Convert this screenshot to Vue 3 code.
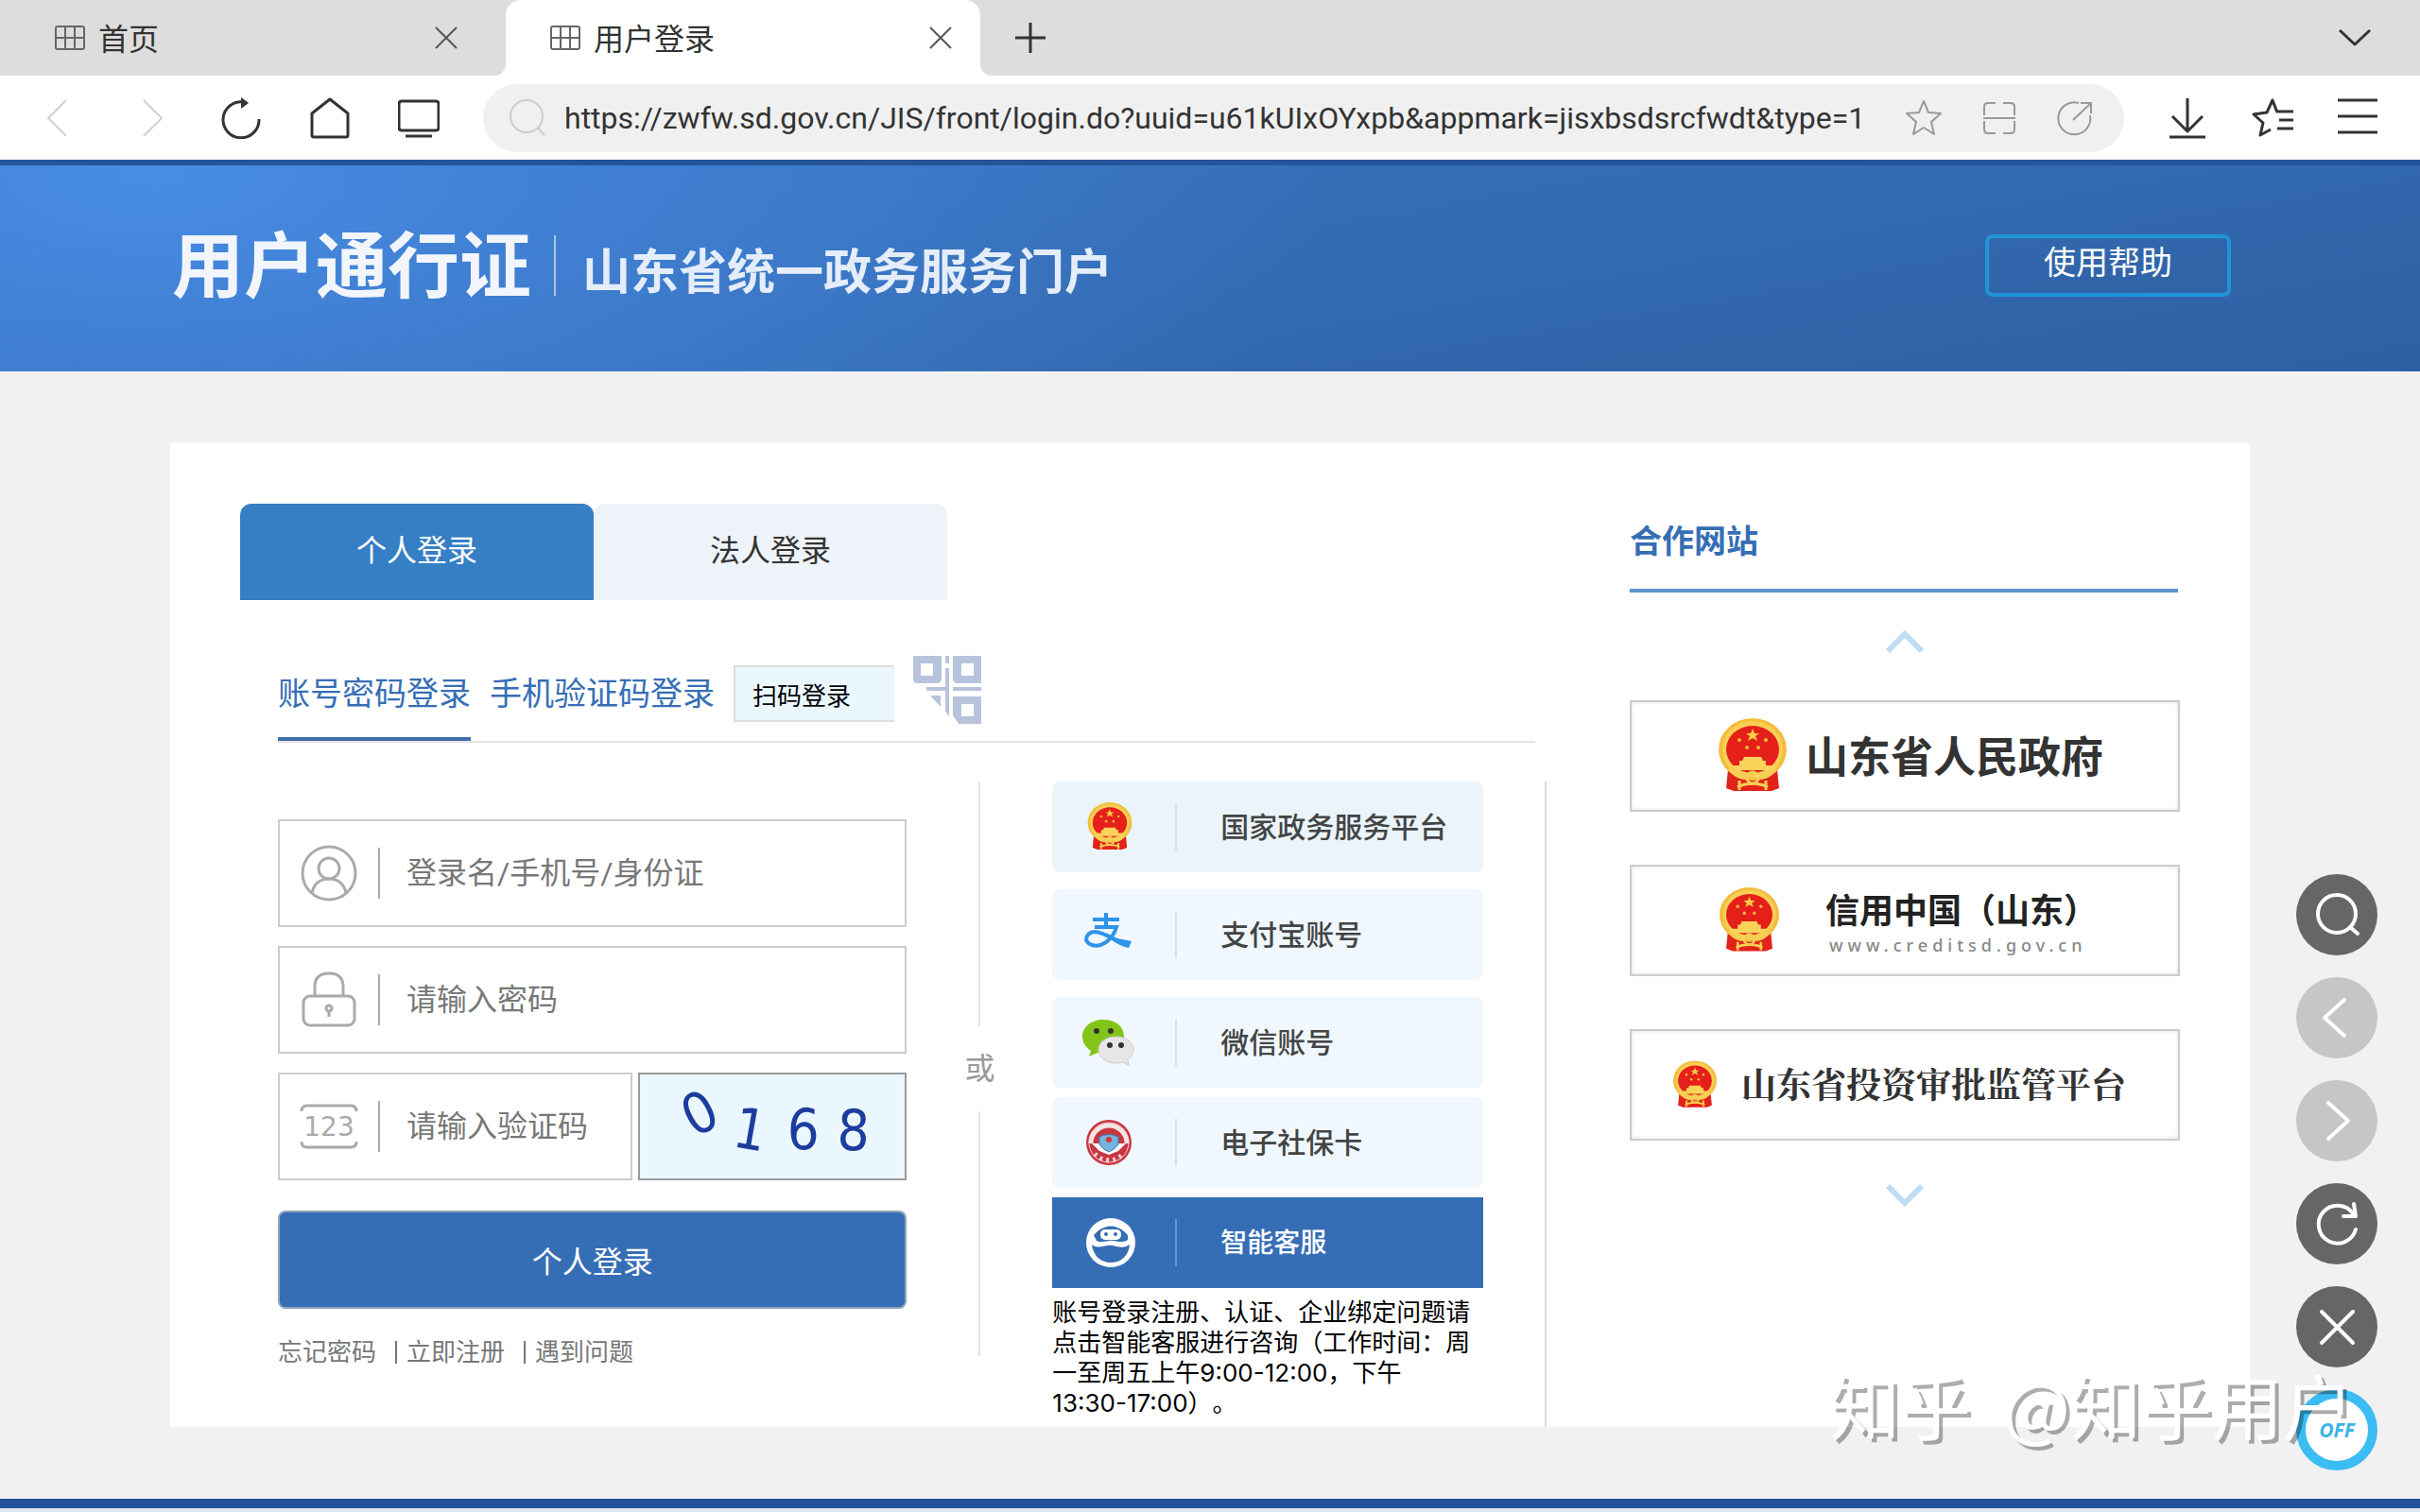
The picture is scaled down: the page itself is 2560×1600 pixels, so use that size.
<script setup>
import { ref } from 'vue'

const url = ref('https://zwfw.sd.gov.cn/JIS/front/login.do?uuid=u61kUIxOYxpb&appmark=jisxbsdsrcfwdt&type=1')
const account = ref('')
const password = ref('')
const code = ref('')

const captcha = [
  { d: '0', x: 62, y: 42, r: -27 },
  { d: '1', x: 118, y: 60, r: 10 },
  { d: '6', x: 176, y: 60, r: 2 },
  { d: '8', x: 231, y: 61, r: 2 }
]
</script>

<template>
  <div class="screen">
    <svg class="defs" aria-hidden="true">
      <symbol id="emblem" viewBox="0 0 72 80">
        <path d="M10 54h52l2 20-8 3H16l-8-3z" fill="#e2231a" />
        <ellipse cx="36" cy="33" rx="36" ry="33" fill="#f3bd3c" />
        <ellipse cx="36" cy="33" rx="32" ry="30" fill="#f8cf55" />
        <ellipse cx="36" cy="33" rx="28" ry="25" fill="#e5201a" />
        <path d="M36 11l2 5h5l-4 3 2 5-5-3-5 3 2-5-4-3h5z" fill="#f6cf45" />
        <g fill="#f3b93a">
          <circle cx="22" cy="23" r="2" /><circle cx="50" cy="23" r="2" />
          <circle cx="30" cy="31" r="2" /><circle cx="42" cy="31" r="2" />
        </g>
        <path d="M27 41h18l2 4h3v5h8l-4 5H18l-4-5h8v-5h3z" fill="#fbd25a" />
        <path d="M12 53c8 11 16 12 24 5 8 7 16 6 24-5" fill="none" stroke="#f8cf55" stroke-width="4" />
        <circle cx="36" cy="63" r="6" fill="none" stroke="#f8cf55" stroke-width="3" />
        <path d="M20 73c8-5 24-5 32 0M22 66v10M50 66v10" fill="none" stroke="#f8cf55" stroke-width="3" />
      </symbol>
      <symbol id="grid" viewBox="0 0 44 44">
        <path d="M9 10h26q2 0 2 2v20q0 2-2 2H9q-2 0-2-2V12q0-2 2-2zM7 22h30M17 10v24M27 10v24" fill="none" stroke="#666" stroke-width="2" />
      </symbol>
      <symbol id="cross" viewBox="0 0 44 44">
        <path d="M11 11l22 22M33 11L11 33" fill="none" stroke="#555" stroke-width="2" />
      </symbol>
    </svg>

    <div class="tabstrip">
      <div class="tab">
        <svg class="ic"><use href="#grid" /></svg>
        <span class="tab-title">首页</span>
        <button class="icon-btn" aria-label="关闭首页"><svg class="ic"><use href="#cross" /></svg></button>
      </div>
      <div class="tab active">
        <svg class="ic"><use href="#grid" /></svg>
        <span class="tab-title">用户登录</span>
        <button class="icon-btn" aria-label="关闭用户登录"><svg class="ic"><use href="#cross" /></svg></button>
      </div>
      <button class="icon-btn add" aria-label="新标签页">
        <svg class="ic" viewBox="0 0 44 44"><path d="M22 6v32M6 22h32" class="dark" /></svg>
      </button>
      <button class="icon-btn more" aria-label="全部标签页">
        <svg class="ic" viewBox="0 0 44 44"><path d="M6 14l16 15 16-15" class="dark" /></svg>
      </button>
    </div>

    <div class="toolbar">
      <div class="history">
        <button class="icon-btn" aria-label="后退"><svg class="ic" viewBox="0 0 44 44"><path d="M32 3L13 22l19 19" class="light" /></svg></button>
        <button class="icon-btn" aria-label="前进"><svg class="ic" viewBox="0 0 44 44"><path d="M12 3l19 19-19 19" class="light" /></svg></button>
      </div>
      <div class="actions">
        <button class="icon-btn" aria-label="刷新"><svg class="ic" viewBox="0 0 44 44"><path d="M41 23a19 19 0 1 1-16-18" class="dark" /><path d="M22 0l8 6-8 6z" fill="#333" /></svg></button>
        <button class="icon-btn" aria-label="主页"><svg class="ic" viewBox="0 0 44 44"><path d="M3 17L22 2l19 15v23q0 2-2 2H5q-2 0-2-2z" class="dark" /></svg></button>
        <button class="icon-btn" aria-label="桌面模式"><svg class="ic" viewBox="0 0 44 44"><path d="M4 4h36q3 0 3 3v25q0 3-3 3H4q-3 0-3-3V7q0-3 3-3zM8 41h28" class="dark" /></svg></button>
      </div>
      <div class="address">
        <svg class="ic" viewBox="0 0 44 44"><circle cx="22" cy="20" r="17" fill="none" stroke="#ccc" stroke-width="2" /><path d="M34 32l7 8" stroke="#ccc" stroke-width="2" /></svg>
        <input v-model="url" class="url" type="text" aria-label="网址" />
        <div class="address-tools">
          <button class="icon-btn" aria-label="收藏"><svg class="ic" viewBox="0 0 44 44"><path d="M22 4l5 12 13 1-10 9 3 13-11-7-11 7 3-13-10-9 13-1z" class="mid" /></svg></button>
          <button class="icon-btn" aria-label="扫描"><svg class="ic" viewBox="0 0 44 44"><path d="M18 6h-8q-4 0-4 4v9M26 6h8q4 0 4 4v9M18 38h-8q-4 0-4-4v-9M26 38h8q4 0 4-4v-9M5 22h34" class="mid" /></svg></button>
          <button class="icon-btn" aria-label="分享"><svg class="ic" viewBox="0 0 44 44"><path d="M26 6A17 17 0 1 0 38 19M28 6h11v11M39 6L20 24" class="mid" /></svg></button>
        </div>
      </div>
      <div class="menus">
        <button class="icon-btn" aria-label="下载"><svg class="ic" viewBox="0 0 44 44"><path d="M22 1v34M6 20l16 16 16-16M3 42h38" class="dark" /></svg></button>
        <button class="icon-btn" aria-label="书签"><svg class="ic" viewBox="0 0 44 44"><path d="M27 16l-5-13-6 13-14 2 10 9-3 13 11-6M26 15h18M29 24h15M27 33h17" class="dark" /></svg></button>
        <button class="icon-btn" aria-label="菜单"><svg class="ic" viewBox="0 0 44 44"><path d="M1 3h42M1 20h42M1 37h42" class="dark" /></svg></button>
      </div>
    </div>

    <header class="banner">
      <div class="brand">
        <h1>用户通行证</h1>
        <span class="brand-line"></span>
        <span class="brand-sub">山东省统一政务服务门户</span>
      </div>
      <button class="help">使用帮助</button>
    </header>

    <main class="page">
      <div class="card">
        <section class="login">
          <div class="roles">
            <button class="role on">个人登录</button>
            <button class="role">法人登录</button>
          </div>
          <div class="methods">
            <a href="#" class="method on">账号密码登录</a>
            <a href="#" class="method">手机验证码登录</a>
            <button class="scan">扫码登录</button>
            <svg class="qr" viewBox="0 0 72 72">
              <path d="M0 0h30v24q0 5-5 5H5q-5 0-5-5zM42 0h30v29H47q-5 0-5-5zM42 43h30v29H48l-6-9z" fill="#b7c3db" />
              <path d="M8 8h13v13H8zM51 8h13v13H51zM51 51h13v13H51z" fill="#fff" />
              <path d="M34 0h4v8h-4zM34 13h4v20h-4zM14 33h24v4H14zM42 33h30v4H42zM34 37h4v27l-4-5zM18 42h11v12z" fill="#b7c3db" />
            </svg>
          </div>
          <div class="body">
            <form class="form" @submit.prevent>
              <label class="field">
                <svg class="fi" viewBox="0 0 64 64"><g class="soft"><circle cx="32" cy="32" r="28" /><circle cx="32" cy="27" r="11" /><path d="M14 53c2-10 9-15 18-15s16 5 18 15" /></g></svg>
                <input v-model="account" type="text" placeholder="登录名/手机号/身份证" aria-label="登录名" />
              </label>
              <label class="field">
                <svg class="fi" viewBox="0 0 64 64"><g class="soft"><rect x="5" y="28" width="54" height="31" rx="7" /><path d="M17 28V18q0-14 15-14t15 14v10" /><circle cx="32" cy="41" r="3" /><path d="M32 44v6" /></g></svg>
                <input v-model="password" type="password" placeholder="请输入密码" aria-label="密码" />
              </label>
              <div class="code-row">
                <label class="field">
                  <svg class="fi" viewBox="0 0 64 64"><path d="M3 16q0-6 6-6h46q6 0 6 6M3 48q0 6 6 6h46q6 0 6-6" class="soft" /><text x="32" y="42" text-anchor="middle" class="num">123</text></svg>
                  <input v-model="code" type="text" placeholder="请输入验证码" aria-label="验证码" />
                </label>
                <button type="button" class="captcha" aria-label="换一张验证码">
                  <svg viewBox="0 0 284 114">
                    <text v-for="c in captcha" :key="c.d" :transform="`translate(${c.x} ${c.y}) rotate(${c.r})`" y="22" text-anchor="middle">{{ c.d }}</text>
                  </svg>
                </button>
              </div>
              <button class="submit">个人登录</button>
              <div class="links">
                <a href="#">忘记密码</a><a href="#">立即注册</a><a href="#">遇到问题</a>
              </div>
            </form>

            <div class="or"><span></span>或<span></span></div>

            <div class="others">
              <button class="other first">
                <svg class="oi" viewBox="0 0 56 56"><use href="#emblem" x="4" y="2" width="50" height="52" /></svg><i></i><span>国家政务服务平台</span>
              </button>
              <button class="other">
                <svg class="oi" viewBox="0 0 56 56"><path d="M11 12h28M25 5v15M13 20h23C32 34 20 42 10 39 0 35 4 26 13 25c11 0 22 11 37 14" fill="none" stroke="#2f93ea" stroke-width="4" /><path d="M27 30l25 5-3 7c-9-2-16-6-22-12z" fill="#2f93ea" /></svg><i></i><span>支付宝账号</span>
              </button>
              <button class="other">
                <svg class="oi" viewBox="0 0 56 56"><path d="M22 4C9 4 0 12 0 22c0 6 3 11 9 15l-2 6 9-4c18 3 28-6 28-17S35 4 22 4z" fill="#83c41a" /><path d="M36 22c-11 0-19 6-19 14s8 14 19 14c3 0 5 0 7-1l6 3-1-6c4-3 6-6 6-10 0-8-8-14-18-14z" fill="#e6e6e6" stroke="#ccc" /><g fill="#333"><circle cx="15" cy="16" r="3" /><circle cx="30" cy="16" r="3" /><circle cx="29" cy="31" r="3" /><circle cx="41" cy="31" r="3" /></g></svg><i></i><span>微信账号</span>
              </button>
              <button class="other">
                <svg class="oi" viewBox="0 0 56 56"><circle cx="28" cy="28" r="24" fill="#c93640" /><circle cx="28" cy="28" r="21" fill="none" stroke="#eed3d5" stroke-width="1" /><path d="M9 29a19 19 0 0 1 38 0" fill="none" stroke="#f7e4e5" stroke-width="5" /><path d="M10 29h36l-8 8-10 4-10-4z" fill="#fff" /><path d="M18 22q10-5 20 0v8q-4 6-10 8-6-2-10-8z" fill="#72b3df" stroke="#3d7fb5" /><circle cx="28" cy="25" r="3" fill="#d33" /><path d="M13 40a20 20 0 0 0 30 0" fill="none" stroke="#f3cfd1" stroke-width="5" stroke-dasharray="3 4" /></svg><i></i><span>电子社保卡</span>
              </button>
              <button class="other robot">
                <svg class="oi" viewBox="0 0 56 56"><circle cx="30" cy="28" r="26" fill="#fff" /><path d="M10 30c8 6 14-1 22 1s12 3 18-1c-1 12-9 19-20 19s-19-8-20-19z" fill="#366eb5" /><path d="M12 20l4-4q14-11 28 0l4 4v5c-4 3-9 2-15 1s-12 3-18 0z" fill="#366eb5" /><rect x="19" y="14" width="22" height="11" rx="5" fill="#fff" /><circle cx="25" cy="19" r="2" fill="#366eb5" /><circle cx="35" cy="19" r="2" fill="#366eb5" /></svg><i></i><span>智能客服</span>
              </button>
              <p class="note">账号登录注册、认证、企业绑定问题请点击智能客服进行咨询（工作时间：周一至周五上午9:00-12:00，下午<span class="keep">13:30-17:00</span>）。</p>
            </div>
          </div>
        </section>

        <aside class="partners">
          <h2>合作网站</h2>
          <button class="arrow" aria-label="上一组"><svg viewBox="0 0 44 28"><path d="M4 24L22 6l18 18" /></svg></button>
          <a href="#" class="partner gov"><svg class="em1"><use href="#emblem" /></svg><span>山东省人民政府</span></a>
          <a href="#" class="partner credit"><svg class="em2"><use href="#emblem" /></svg><span class="two"><b>信用中国（山东）</b><small>www.creditsd.gov.cn</small></span></a>
          <a href="#" class="partner invest"><svg class="em3"><use href="#emblem" /></svg><span>山东省投资审批监管平台</span></a>
          <button class="arrow" aria-label="下一组"><svg viewBox="0 0 44 28"><path d="M4 4l18 18L40 4" /></svg></button>
        </aside>
      </div>
    </main>
    <footer class="foot"></footer>

    <div class="rail">
      <button class="round" aria-label="搜索"><svg viewBox="0 0 86 86"><circle cx="43" cy="42" r="20" /><path d="M57 56l8 7" /></svg></button>
      <button class="round faint" aria-label="后退"><svg viewBox="0 0 86 86"><path d="M51 24L30 43l21 19" /></svg></button>
      <button class="round faint" aria-label="前进"><svg viewBox="0 0 86 86"><path d="M34 24l21 19-21 19" /></svg></button>
      <button class="round" aria-label="刷新"><svg viewBox="0 0 86 86"><path d="M63 49a20 20 0 1 1-3-17M61 22l2 13H50" /></svg></button>
      <button class="round" aria-label="关闭"><svg viewBox="0 0 86 86"><path d="M27 27l33 33M60 27L27 60" /></svg></button>
      <button class="round off">OFF</button>
    </div>
    <div class="watermark"><span>知乎</span> <span>@知乎用户</span></div>
  </div>
</template>

<style>
body {
  background: #f1f1f1;
}
</style>

<style scoped>
.screen {
  --blue: #366eb5;
  min-height: 100vh;
  display: flex;
  flex-direction: column;
  font-family: Roboto, "Noto Sans CJK SC", sans-serif;
  color: #333;
  background: #f1f1f1;
}
* {
  box-sizing: border-box;
}
button,
input {
  font: inherit;
  color: inherit;
  border: 0;
  margin: 0;
  padding: 0;
  background: none;
}
a {
  color: inherit;
  text-decoration: none;
}
svg {
  display: block;
  flex: none;
}
.defs {
  position: absolute;
  width: 0;
  height: 0;
}
.ic {
  width: 44px;
  height: 44px;
}
.icon-btn {
  width: 44px;
  height: 44px;
  flex: none;
}
.dark,
.light,
.mid {
  fill: none;
  stroke: #333;
  stroke-width: 3;
  stroke-linejoin: round;
}
.light {
  stroke: #d0d0d0;
  stroke-width: 2;
}
.mid {
  stroke: #999;
  stroke-width: 2;
}

.tabstrip {
  display: flex;
  align-items: center;
  height: 80px;
  background: #ddd;
  padding-right: 47px;
}
.tab {
  display: flex;
  align-items: center;
  gap: 8px;
  width: 535px;
  height: 80px;
  padding: 0 41px 0 52px;
  font-size: 32px;
}
.tab.active {
  position: relative;
  width: 502px;
  padding: 0 20px 0 41px;
  background: #fff;
  border-radius: 16px 16px 0 0;
}
.tab.active::before,
.tab.active::after {
  content: "";
  position: absolute;
  bottom: 0;
  width: 12px;
  height: 12px;
  background: radial-gradient(circle at 0 0, #ddd 12px, #fff 12px);
}
.tab.active::before {
  left: -12px;
}
.tab.active::after {
  right: -12px;
  background: radial-gradient(circle at 100% 0, #ddd 12px, #fff 12px);
}
.tab-title {
  flex: 1;
  padding-bottom: 2px;
}
.add {
  margin-left: 31px;
}
.more {
  margin-left: auto;
}

.toolbar {
  display: flex;
  align-items: center;
  height: 89px;
  padding: 0 44px 0 38px;
  background: #fff;
}
.history {
  display: flex;
  gap: 58px;
}
.actions {
  display: flex;
  gap: 50px;
  margin: 0 46px 0 49px;
}
.address {
  flex: 1;
  display: flex;
  align-items: center;
  height: 72px;
  padding: 0 30px 0 24px;
  border-radius: 36px;
  background: #f0f0f0;
}
.url {
  flex: 1;
  min-width: 0;
  margin-left: 18px;
  font-size: 32px;
  outline: 0;
}
.address-tools {
  display: flex;
  gap: 36px;
}
.menus {
  display: flex;
  gap: 46px;
  margin-left: 45px;
}

.banner {
  display: flex;
  align-items: center;
  justify-content: space-between;
  height: 224px;
  padding: 0 200px 6px 182px;
  border-top: 6px solid #24549a;
  background:
    radial-gradient(ellipse 1250px 520px at 160px 10px, #488ce4 0%, rgba(66, 131, 216, 0.75) 40%, rgba(54, 113, 186, 0) 100%),
    linear-gradient(170deg, #3a76c4 0%, #356db5 40%, #2d60a3 100%);
  color: #fff;
}
.brand {
  display: flex;
  align-items: center;
  color: #f2f6fc;
}
.brand h1 {
  margin: 0;
  padding-top: 4px;
  font-size: 76px;
  line-height: 100px;
  font-weight: 700;
}
.brand-line {
  width: 2px;
  height: 64px;
  margin: 0 28px 0 24px;
  background: #a9c5ea;
}
.brand-sub {
  font-size: 51px;
  line-height: 72px;
  font-weight: 700;
  padding-top: 16px;
  color: #e4edf9;
}
.help {
  width: 260px;
  height: 66px;
  padding-bottom: 6px;
  border: 4px solid #1f95d8;
  border-radius: 8px;
  font-size: 34px;
  line-height: 48px;
}

.page {
  flex: 1;
  padding: 76px 180px;
}
.card {
  display: grid;
  grid-template-columns: minmax(0, 1fr) 582px;
  gap: 88px;
  padding: 64px 74px 0;
  background: #fff;
}
.roles {
  display: flex;
}
.role {
  width: 374px;
  height: 102px;
  border-radius: 12px 12px 0 0;
  background: #edf3f8;
  font-size: 32px;
  padding-bottom: 8px;
}
.role.on {
  background: #367fc4;
  color: #fff;
}
.methods {
  display: flex;
  align-items: center;
  gap: 20px;
  margin: 49px 12px 0 40px;
  border-bottom: 2px solid #e4e4e4;
}
.method {
  height: 100px;
  line-height: 92px;
  border: solid transparent;
  border-width: 4px 0;
  font-size: 34px;
  color: var(--blue);
}
.method.on {
  border-bottom-color: #3f6fb0;
}
.scan {
  width: 170px;
  height: 60px;
  padding-left: 18px;
  border: solid #ddd;
  border-width: 2px 0 2px 2px;
  background: #ebf7ff;
  color: #000;
  font-size: 26px;
  text-align: left;
}
.qr {
  width: 72px;
  height: 72px;
  margin-bottom: 8px;
}
.body {
  display: grid;
  grid-template-columns: minmax(0, 666fr) minmax(0, 154fr) minmax(0, 456fr);
  margin: 41px 0 0 40px;
  padding-right: 65px;
  border-right: 2px solid #ddd;
}
.form {
  display: flex;
  flex-direction: column;
  gap: 20px;
  padding-top: 40px;
}
.field {
  display: flex;
  align-items: center;
  flex: 1;
  min-width: 0;
  min-height: 114px;
  max-height: 114px;
  padding-left: 20px;
  border: 2px solid #ccc;
}
.fi {
  width: 64px;
  height: 64px;
}
.soft {
  fill: none;
  stroke: #aaa;
  stroke-width: 3;
}
.num {
  font: 28px "DejaVu Sans", sans-serif;
  fill: #aaa;
}
.field input {
  flex: 1;
  min-width: 0;
  height: 54px;
  margin-left: 20px;
  padding-left: 28px;
  border-left: 2px solid #aaa;
  font-size: 32px;
  outline: 0;
}
.field input::placeholder {
  color: #777;
  opacity: 1;
}
.code-row {
  display: flex;
  gap: 6px;
}
.captcha {
  width: 284px;
  height: 114px;
  border: 2px solid #999;
  background: #ebf7ff;
}
.captcha svg {
  width: 100%;
  height: 100%;
}
.captcha text {
  font: 62px "Liberation Sans Narrow", "DejaVu Sans Condensed", sans-serif;
  fill: #1d3d9e;
}
.submit {
  height: 104px;
  margin-top: 12px;
  border: 2px solid #8fa3bd;
  border-radius: 8px;
  background: var(--blue);
  color: #fff;
  font-size: 32px;
}
.links {
  display: flex;
  align-items: center;
  margin-top: 8px;
  font-size: 26px;
  line-height: 36px;
  color: #777;
}
.links a + a {
  display: flex;
  align-items: center;
  margin-left: 20px;
}
.links a + a::before {
  content: "";
  width: 2px;
  height: 24px;
  margin-right: 10px;
  background: #777;
}
.or {
  display: flex;
  flex-direction: column;
  align-items: center;
  gap: 22px;
  padding-bottom: 75px;
  font-size: 32px;
  line-height: 46px;
  color: #999;
}
.or span {
  flex: 1;
  width: 2px;
  background: #e2e2e2;
}
.others {
  display: flex;
  flex-direction: column;
  gap: 10px;
}
.other {
  display: flex;
  align-items: center;
  height: 96px;
  padding-left: 32px;
  border-radius: 8px;
  background: #f0f7fe;
  font-size: 30px;
  font-weight: 500;
  font-family: "Noto Sans CJK SC", sans-serif;
  color: #444;
  white-space: nowrap;
}
.other span {
  padding-bottom: 4px;
}
.other:nth-child(-n + 2) {
  margin-bottom: 8px;
}
.other.first {
  background: #eaf4fa;
}
.other.robot {
  border-radius: 0;
  background: var(--blue);
  color: #fff;
  font-size: 28px;
}
.oi {
  width: 56px;
  height: 56px;
}
.other i {
  width: 2px;
  height: 50px;
  margin: 0 46px 0 42px;
  background: #d3e1f1;
}
.robot i {
  background: #6a98d2;
}
.note {
  margin: 0;
  padding-bottom: 9px;
  font: 26px/32px Inter, "Noto Sans CJK SC", sans-serif;
  text-spacing-trim: space-all;
  color: #000;
}
.keep {
  white-space: nowrap;
}

.partners h2 {
  margin: 0 2px 0 0;
  padding: 16px 0 26px;
  border-bottom: 4px solid #5f94d1;
  font-size: 34px;
  line-height: 48px;
  font-weight: 700;
  color: var(--blue);
}
.arrow {
  display: block;
  margin: 38px auto 48px;
}
.arrow svg {
  width: 44px;
  height: 28px;
}
.arrow path {
  fill: none;
  stroke: #c0dcf2;
  stroke-width: 6;
}
.partner {
  display: flex;
  align-items: center;
  height: 118px;
  margin-bottom: 56px;
  padding-left: 92px;
  border: 2px solid #ccc;
  box-shadow: inset 0 0 4px #ddd;
}
.partner > span {
  padding-bottom: 4px;
}
.partner + .arrow {
  margin: -12px auto 0;
}
.gov {
  font-size: 45px;
  font-weight: 700;
}
.em1 {
  width: 72px;
  height: 80px;
  margin-right: 20px;
}
.em2 {
  width: 65px;
  height: 70px;
  margin-right: 48px;
}
.partner .two {
  display: flex;
  flex-direction: column;
  padding: 6px 0 0;
}
.two b {
  font-size: 36px;
  line-height: 46px;
  text-spacing-trim: space-all;
  color: #222;
}
.two small {
  padding-left: 4px;
  font: 500 18px/24px "Noto Sans", sans-serif;
  letter-spacing: 5px;
  color: #888;
}
.partner.invest {
  padding-left: 44px;
  font-family: "Noto Serif CJK SC", "Noto Sans CJK SC", serif;
  font-size: 37px;
  font-weight: 700;
}
.em3 {
  width: 46px;
  height: 52px;
  margin-right: 26px;
}
.foot {
  height: 15px;
  border-top: 10px solid #25529a;
  background: #dde6f2;
}

.rail {
  position: fixed;
  right: 45px;
  bottom: 44px;
  display: flex;
  flex-direction: column;
  gap: 23px;
}
.round {
  width: 86px;
  height: 86px;
  border-radius: 50%;
  background: #666;
}
.round svg {
  fill: none;
  stroke: #fff;
  stroke-width: 4;
  stroke-linecap: round;
  stroke-linejoin: round;
}
.round.faint {
  background: #c6c6c6;
}
.round.off {
  border: 10px solid #3bbcf2;
  background: #fff;
  color: #3bb4ea;
  font: italic 700 21px "Open Sans", sans-serif;
}
.watermark {
  position: fixed;
  right: 70px;
  bottom: 75px;
  display: flex;
  gap: 34px;
  font: 75px/78px "Noto Sans CJK SC", sans-serif;
  color: #fff;
  text-shadow: 4px 4px 0 rgba(0, 0, 0, 0.32);
  pointer-events: none;
}
</style>
